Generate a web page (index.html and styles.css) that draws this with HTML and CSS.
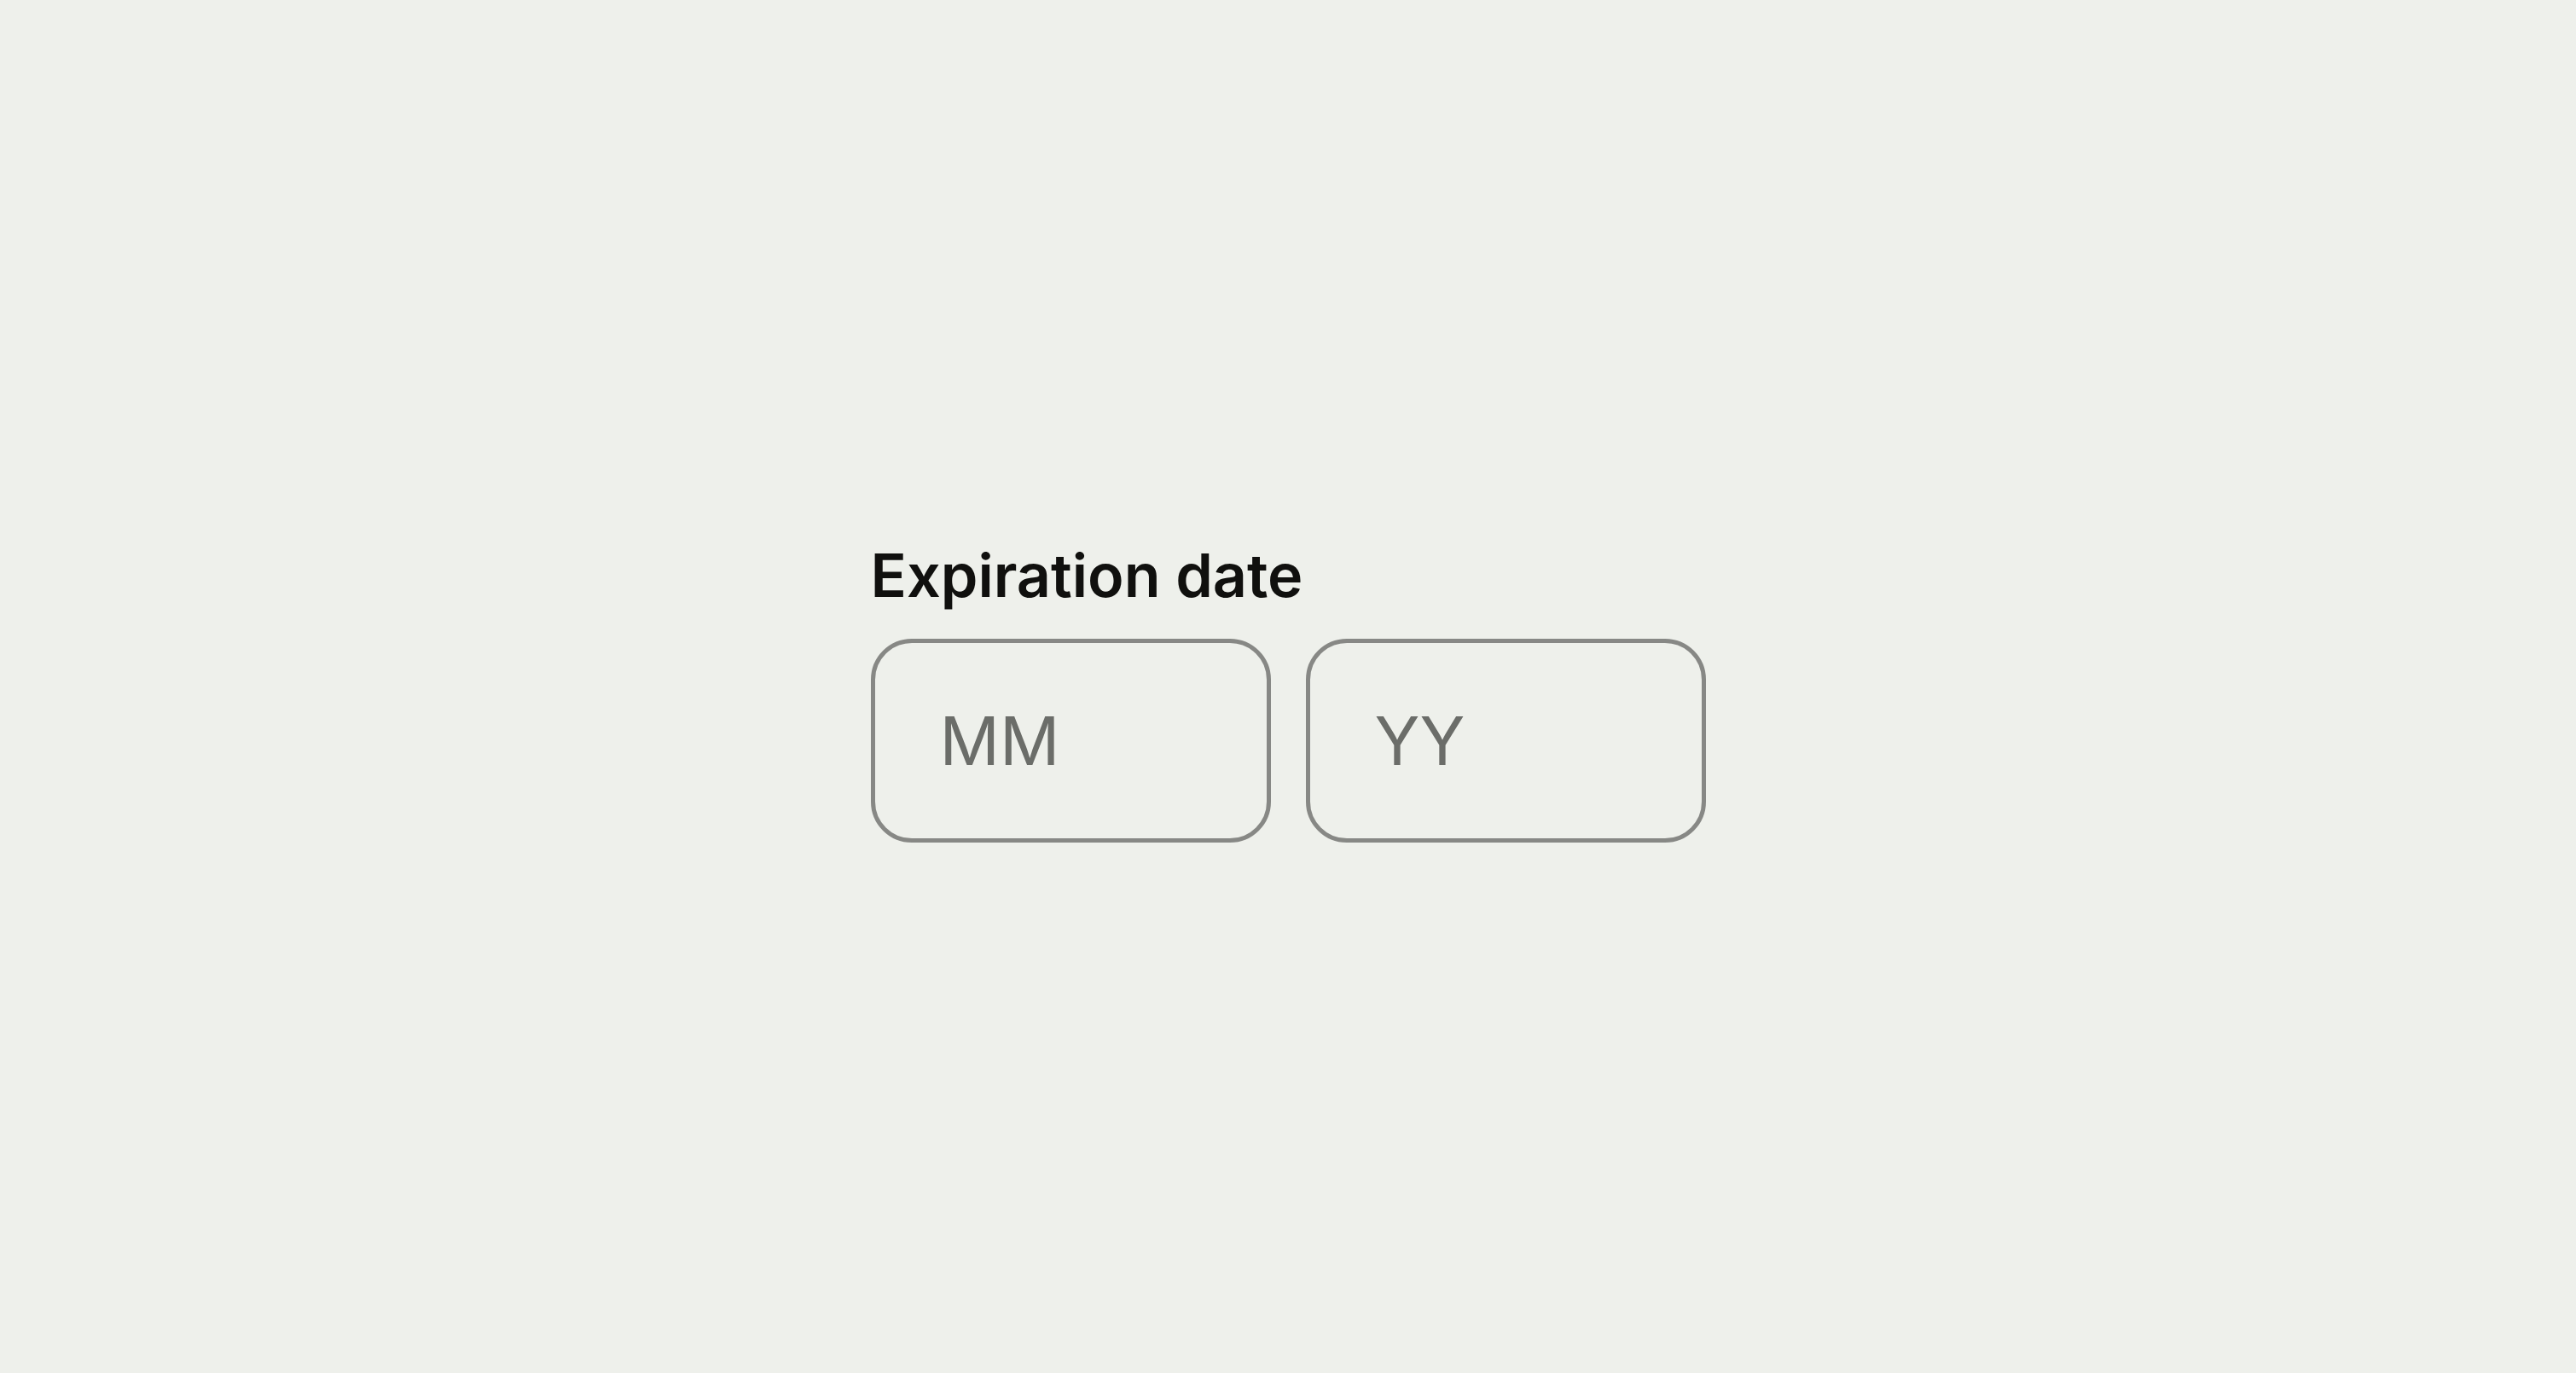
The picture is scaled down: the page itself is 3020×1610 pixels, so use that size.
FILE: index.html
```html
<!DOCTYPE html>
<html lang="en">
<head>
<meta charset="utf-8">
<title>Expiration date</title>
<link rel="stylesheet" href="styles.css">
</head>
<body>
<main class="page">
  <div class="field">
    <label class="field-label" for="mm">Expiration date</label>
    <div class="inputs">
      <input class="date-input" id="mm" type="text" placeholder="MM">
      <input class="date-input" id="yy" type="text" placeholder="YY">
    </div>
  </div>
</main>
</body>
</html>
```

FILE: styles.css
```css
html, body {
  margin: 0;
  padding: 0;
  height: 100%;
}
body {
  background: #eef0eb;
  font-family: Inter, "Noto Sans", sans-serif;
}
.page {
  height: 100%;
  display: flex;
  align-items: center;
  justify-content: center;
  box-sizing: border-box;
  padding-top: 11px;
}
.field {
  width: 979px;
  display: flex;
  flex-direction: column;
}
.field-label {
  font-size: 70px;
  font-weight: 600;
  line-height: 84px;
  color: #10100e;
  margin-bottom: 32px;
  padding-left: 0;
}
.inputs {
  display: flex;
  gap: 41px;
}
.date-input {
  flex: 1;
  min-width: 0;
  height: 239px;
  box-sizing: border-box;
  border: 5px solid #878885;
  border-radius: 48px;
  background: transparent;
  padding: 0 0 0 76px;
  font-family: Inter, "Noto Sans", sans-serif;
  font-size: 78px;
  color: #10100e;
  outline: none;
}
.date-input::placeholder {
  color: #6b6d69;
  opacity: 1;
}
```
